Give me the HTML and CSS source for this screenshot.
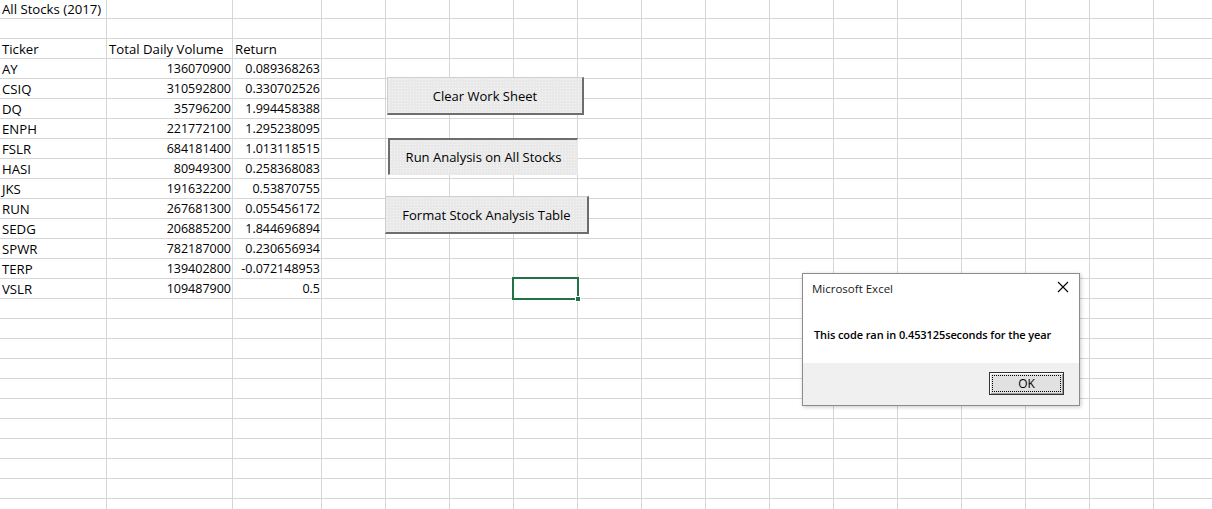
FILE: index.html
```html
<!DOCTYPE html>
<html lang="en">
<head>
<meta charset="utf-8">
<title>All Stocks (2017)</title>
<link rel="stylesheet" href="styles.css">
</head>
<body>
<div class="sheet">
  <div class="data">
    <div class="cell title">All Stocks (2017)</div><div class="cell"></div><div class="cell"></div>
    <div class="cell"></div><div class="cell"></div><div class="cell"></div>
    <div class="cell">Ticker</div><div class="cell">Total Daily Volume</div><div class="cell">Return</div>
    <div class="cell">AY</div><div class="cell num">136070900</div><div class="cell num">0.089368263</div>
    <div class="cell">CSIQ</div><div class="cell num">310592800</div><div class="cell num">0.330702526</div>
    <div class="cell">DQ</div><div class="cell num">35796200</div><div class="cell num">1.994458388</div>
    <div class="cell">ENPH</div><div class="cell num">221772100</div><div class="cell num">1.295238095</div>
    <div class="cell">FSLR</div><div class="cell num">684181400</div><div class="cell num">1.013118515</div>
    <div class="cell">HASI</div><div class="cell num">80949300</div><div class="cell num">0.258368083</div>
    <div class="cell">JKS</div><div class="cell num">191632200</div><div class="cell num">0.53870755</div>
    <div class="cell">RUN</div><div class="cell num">267681300</div><div class="cell num">0.055456172</div>
    <div class="cell">SEDG</div><div class="cell num">206885200</div><div class="cell num">1.844696894</div>
    <div class="cell">SPWR</div><div class="cell num">782187000</div><div class="cell num">0.230656934</div>
    <div class="cell">TERP</div><div class="cell num">139402800</div><div class="cell num">-0.072148953</div>
    <div class="cell">VSLR</div><div class="cell num">109487900</div><div class="cell num">0.5</div>
  </div>

  <button class="sheet-btn btn-clear">Clear Work Sheet</button>
  <button class="sheet-btn btn-run">Run Analysis on All Stocks</button>
  <button class="sheet-btn btn-format">Format Stock Analysis Table</button>

  <div class="selection"><span class="handle"></span></div>

  <div class="dialog">
    <div class="dialog-head">
      <span class="dialog-title">Microsoft Excel</span>
      <svg class="dialog-close" width="12" height="12" viewBox="0 0 12 12"><path d="M1 1 L11 11 M11 1 L1 11" stroke="#000" stroke-width="1.1" fill="none"/></svg>
    </div>
    <div class="dialog-body">This code ran in 0.453125seconds for the year</div>
    <div class="dialog-foot">
      <button class="ok-btn"><span class="ok-focus">OK</span></button>
    </div>
  </div>
</div>
</body>
</html>
```

FILE: styles.css
```css
* { box-sizing: border-box; }
html, body { margin: 0; padding: 0; background: #fff; }
body { width: 1212px; height: 509px; overflow: hidden; }

.sheet {
  position: relative;
  width: 1212px;
  height: 509px;
  overflow: hidden;
  font-family: "Open Sans", "Liberation Sans", sans-serif;
  font-size: 13.2px;
  color: #000;
  background-color: #fff;
  background-image:
    linear-gradient(to right, transparent 106px, #d6d6d6 106px, #d6d6d6 107px, transparent 107px),
    linear-gradient(to right, transparent 232px, #d6d6d6 232px, #d6d6d6 233px, transparent 233px),
    repeating-linear-gradient(to right, #d6d6d6 0, #d6d6d6 1px, transparent 1px, transparent 64px),
    repeating-linear-gradient(to bottom, transparent 0, transparent 18px, #d6d6d6 18px, #d6d6d6 19px, transparent 19px, transparent 20px);
  background-size: 100% 100%, 100% 100%, 900px 100%, 100% 100%;
  background-position: 0 0, 0 0, 321px 0, 0 0;
  background-repeat: no-repeat, no-repeat, no-repeat, no-repeat;
}

.data {
  display: grid;
  grid-template-columns: 107px 126px 89px;
  grid-template-rows: 19px;
  grid-auto-rows: 20px;
  width: 322px;
}

.cell {
  padding: 1px 3px 0 2px;
  line-height: 18px;
  white-space: nowrap;
}
.cell.title { padding-top: 0; overflow: visible; }
.cell.num { text-align: right; padding-right: 2px; font-size: 12.5px; }

.sheet-btn {
  position: absolute;
  font-family: "Open Sans", "Liberation Sans", sans-serif;
  font-size: 13px;
  color: #000;
  background-color: #e9e9e9;
  background-image: radial-gradient(circle, #f6f6f6 0.7px, transparent 0.8px);
  background-size: 3px 3px;
  border-style: solid;
  padding: 0;
  display: flex;
  align-items: center;
  justify-content: center;
}
.btn-clear {
  left: 387px; top: 77px; width: 197px; height: 38px;
  border-width: 1px 2px 2px 1px;
  border-color: #d0d0d0 #6d6d6d #6d6d6d #d0d0d0;
}
.btn-run {
  left: 388px; top: 138px; width: 190px; height: 37px;
  border-width: 2px 1px 1px 2px;
  border-color: #6d6d6d #e9e9e9 #e9e9e9 #6d6d6d;
}
.btn-format {
  left: 385px; top: 196px; width: 204px; height: 38px;
  border-width: 1px 2px 2px 1px;
  border-color: #d0d0d0 #6d6d6d #6d6d6d #d0d0d0;
}

.selection {
  position: absolute;
  left: 512px; top: 277px; width: 67px; height: 23px;
  border: 2px solid #217346;
}
.handle {
  position: absolute;
  right: -4px; bottom: -4px;
  width: 6px; height: 6px;
  background: #217346;
  border: 1px solid #fff;
}

.dialog {
  position: absolute;
  left: 802px; top: 273px; width: 278px; height: 133px;
  background: #fff;
  border: 1px solid #8c8c8c;
  box-shadow: 1px 1px 4px rgba(0,0,0,0.22);
  display: flex;
  flex-direction: column;
  font-family: "Open Sans", "Liberation Sans", sans-serif;
  font-size: 11.5px;
  color: #000;
}
.dialog-head {
  height: 30px;
  display: flex;
  align-items: center;
  justify-content: space-between;
  padding: 0 10px 2px 9px;
}
.dialog-title { color: #1a1a1a; }
.dialog-close { display: block; margin-top: -2px; }
.dialog-body {
  flex: 1;
  padding: 23px 0 0 11px;
  font-weight: 600;
  font-size: 11px;
  letter-spacing: -0.1px;
}
.dialog-foot {
  height: 42px;
  background: #f0f0f0;
  display: flex;
  align-items: flex-start;
  justify-content: flex-end;
  padding: 9px 15px 0 0;
}
.ok-btn {
  width: 75px; height: 23px;
  padding: 2px;
  background: #e1e1e1;
  border: 1px solid #333;
  box-shadow: inset 1px 1px 0 #fff, inset -1px -1px 0 #a0a0a0;
  font-family: "Open Sans", "Liberation Sans", sans-serif;
  font-size: 12px;
  color: #000;
  display: flex;
}
.ok-focus {
  flex: 1;
  border: 1px dotted #000;
  display: flex;
  align-items: center;
  justify-content: center;
  line-height: 14px;
}
```
